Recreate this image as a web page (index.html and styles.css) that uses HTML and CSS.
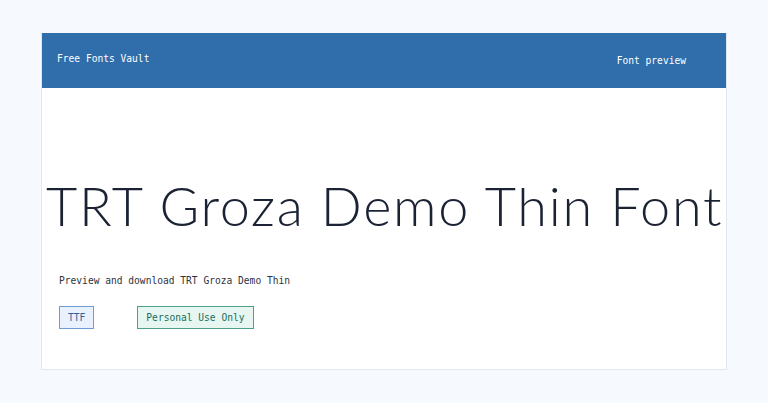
FILE: index.html
```html
<!DOCTYPE html>
<html>
<head>
<link rel="stylesheet" href="styles.css">
</head>
<body>

<div class="card">
  <header class="topbar">
    <span class="brand">Free Fonts Vault</span>
    <span class="nav">Font preview</span>
  </header>

  <div class="content">
    <h1 class="sample">TRT Groza Demo Thin Font</h1>
    <p class="intro">Preview and download TRT Groza Demo Thin</p>
    <div class="tags">
      <span class="tag tag-format">TTF</span>
      <span class="tag tag-license">Personal Use Only</span>
    </div>
  </div>
</div>

</body>
</html>
```

FILE: styles.css
```css
body {
  margin: 0;
  padding: 33px 41px;
  background: #f6f9fd;
  font-family: "DejaVu Sans Mono", "Liberation Mono", monospace;
  font-size: 9.6px;
}

.card {
  background: #fff;
  border: 1px solid #e2e8f0;
  border-top: none;
  height: 337px;
  box-sizing: border-box;
}

.topbar {
  height: 55px;
  background: #2f6dab;
  color: #fff;
  display: flex;
  justify-content: space-between;
  align-items: center;
  padding: 0 40px 0 15px;
}

.brand {
  margin-top: -5px;
}

.nav {
  margin-top: -1px;
}

.content {
  padding: 0 4px 0 4px;
}

.sample {
  font-family: Lato, "Noto Sans", sans-serif;
  font-weight: 300;
  font-size: 54px;
  letter-spacing: 1.7px;
  color: #1a2233;
  margin: 0;
  padding-top: 83px;
  line-height: 70px;
  white-space: nowrap;
}

.intro {
  color: #2d3340;
  margin: 0;
  padding: 0 0 0 13px;
  margin-top: 34px;
}

.tags {
  display: flex;
  gap: 43px;
  padding-left: 13px;
  margin-top: 20px;
}

.tag {
  display: inline-block;
  padding: 5px 8px;
  line-height: 11px;
}

.tag-format {
  background: #e8f1fd;
  border: 1px solid #6f9dd3;
  color: #2f5f9a;
}

.tag-license {
  background: #e7f6f1;
  border: 1px solid #4aa08a;
  color: #16705a;
}
```
